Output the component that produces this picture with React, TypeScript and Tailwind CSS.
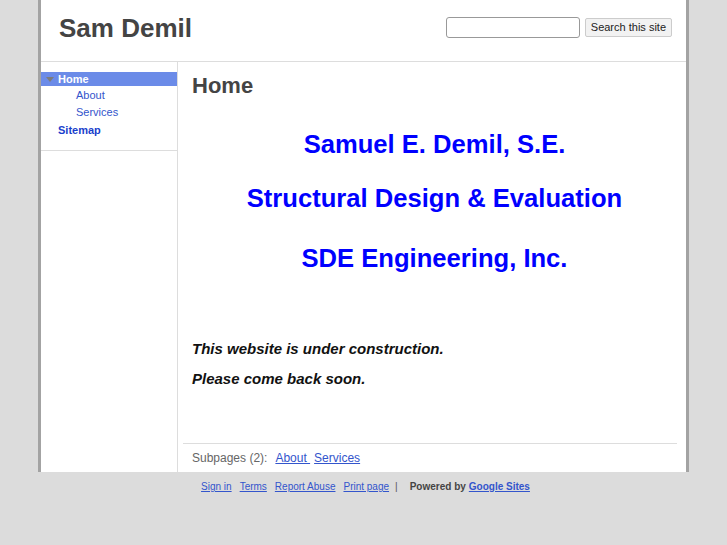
import React from "react";

const font = { fontFamily: '"Liberation Sans", Arial, sans-serif' };

const Header = () => (
  <div className="flex items-center justify-between h-[62px] border-b border-[#dddddd] pl-[18px] pr-[14px]">
    <h1 className="text-[26px] font-bold text-[#444444] leading-none -mt-[6px]">Sam Demil</h1>
    <div className="flex items-center gap-[5px] -mt-[6px]">
      <input
        type="text"
        className="w-[134px] h-[21px] border border-[#999999] rounded-[3px] bg-white"
      />
      <button className="h-[19px] px-[5px] text-[11px] text-[#222222] bg-[#f2f2f2] border border-[#cccccc] rounded-[2px] leading-none">
        Search this site
      </button>
    </div>
  </div>
);

const Sidebar = () => (
  <div className="w-[137px] shrink-0 border-r border-[#dddddd]">
    <div className="pt-[10px] pb-[10px] border-b border-[#dddddd]">
      <div className="flex items-center h-[14px] bg-[#6b8be8] text-white text-[11px] font-bold">
        <span className="ml-[5px] mr-[4px] w-0 h-0 border-l-[4px] border-r-[4px] border-t-[5px] border-l-transparent border-r-transparent border-t-[#7c7c7c]" />
        Home
      </div>
      <div className="text-[11px] text-[#3355cc] pl-[35px] leading-[17px] mt-[1px]">About</div>
      <div className="text-[11px] text-[#3355cc] pl-[35px] leading-[17px]">Services</div>
      <div className="text-[11px] text-[#1a3fcc] font-bold pl-[17px] leading-[19px]">Sitemap</div>
    </div>
  </div>
);

const Main = () => (
  <div className="flex-1 flex flex-col">
    <div className="flex-1 pl-[14px] pr-[9px]">
      <h2 className="text-[22px] font-bold text-[#444444] mt-[11px] leading-[26px]">Home</h2>
      <div className="text-center text-[25.6px] font-bold text-[#0000ff] mt-[30px]">
        <div className="leading-[30px]">Samuel E. Demil, S.E.</div>
        <div className="leading-[30px] mt-[24px]">Structural Design &amp; Evaluation</div>
        <div className="leading-[30px] mt-[30px]">SDE Engineering, Inc.</div>
      </div>
      <div className="text-[15px] font-bold italic text-[#111111] mt-[66px]">
        <div className="leading-[20px]">This website is under construction.</div>
        <div className="leading-[20px] mt-[10px]">Please come back soon.</div>
      </div>
    </div>
    <div className="mx-[5px] mr-[9px] border-t border-[#dddddd] pt-[7px] pb-[6px] pl-[9px] text-[12px] leading-[15px]">
      <span className="text-[#666666]">Subpages (2):</span>
      <a className="ml-[8px] text-[#3355cc] underline">About </a>
      <a className="ml-[4px] text-[#3355cc] underline">Services</a>
    </div>
  </div>
);

const Footer = () => (
  <div className="flex justify-center text-[10px] leading-[14px] pt-[8px] pl-[4px]">
    <a className="text-[#3355cc] underline">Sign in</a>
    <a className="ml-[8px] text-[#3355cc] underline">Terms</a>
    <a className="ml-[8px] text-[#3355cc] underline">Report Abuse</a>
    <a className="ml-[8px] text-[#3355cc] underline">Print page</a>
    <span className="ml-[6px] text-[#555555]">|</span>
    <span className="ml-[12px] font-bold text-[#444444]">Powered by</span>
    <a className="ml-[3px] font-bold text-[#3355cc] underline">Google Sites</a>
  </div>
);

export default function App() {
  return (
    <div className="min-h-[545px] bg-[#dcdcdc]" style={font}>
      <div className="mx-auto w-[651px] bg-white border-l-[3px] border-r-[3px] border-[#a3a3a3] flex flex-col h-[472px]">
        <Header />
        <div className="flex flex-1">
          <Sidebar />
          <Main />
        </div>
      </div>
      <Footer />
    </div>
  );
}
